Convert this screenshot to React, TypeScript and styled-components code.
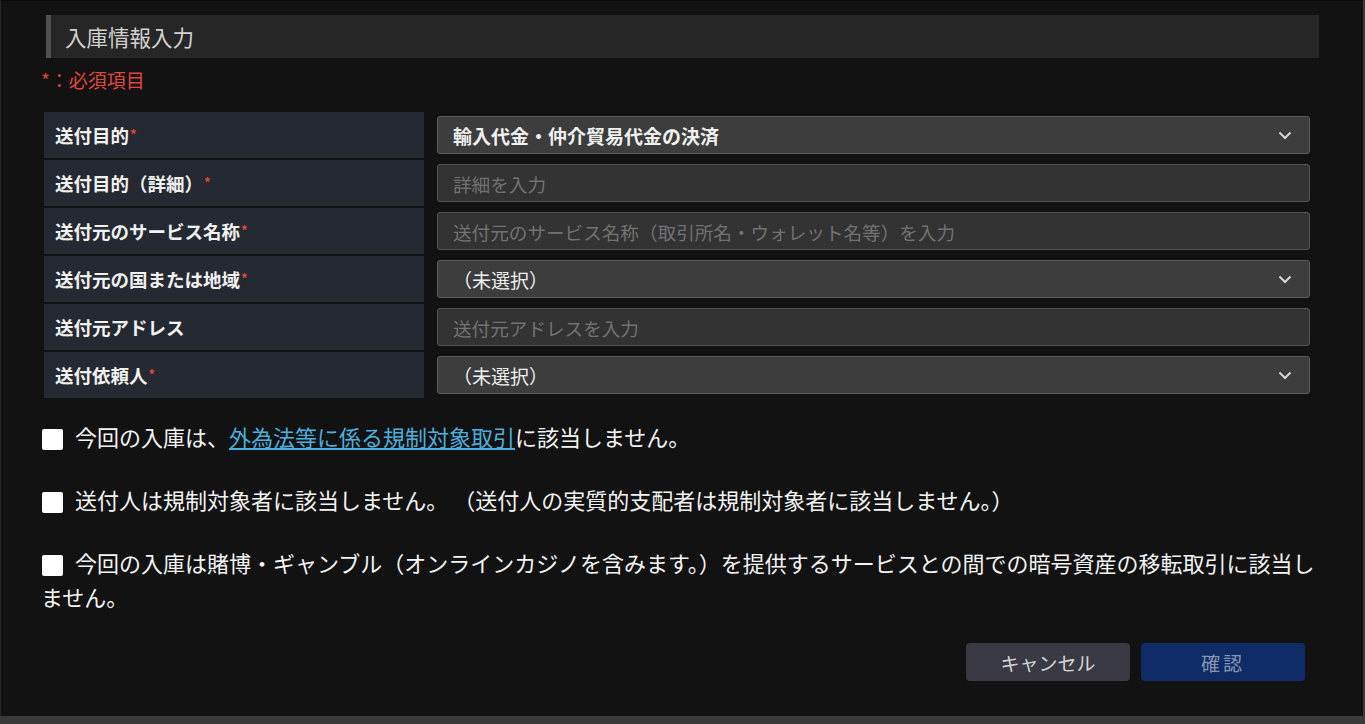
import React from 'react';
import styled, { createGlobalStyle } from 'styled-components';

const GlobalStyle = createGlobalStyle`
  body {
    margin: 0;
    background: #3a3a3a;
    font-family: "Noto Sans CJK JP", "Noto Sans", sans-serif;
  }
`;

type Field = {
  label: string;
  required?: boolean;
  kind: 'select' | 'input';
  value?: string;
  placeholder?: string;
};

const fields: Field[] = [
  { label: '送付目的', required: true, kind: 'select', value: '輸入代金・仲介貿易代金の決済' },
  { label: '送付目的（詳細）', required: true, kind: 'input', placeholder: '詳細を入力' },
  { label: '送付元のサービス名称', required: true, kind: 'input', placeholder: '送付元のサービス名称（取引所名・ウォレット名等）を入力' },
  { label: '送付元の国または地域', required: true, kind: 'select', value: '（未選択）' },
  { label: '送付元アドレス', kind: 'input', placeholder: '送付元アドレスを入力' },
  { label: '送付依頼人', required: true, kind: 'select', value: '（未選択）' },
];

const Chevron = () => (
  <svg width="14" height="9" viewBox="0 0 14 9">
    <polyline points="1.5,1.5 7,7 12.5,1.5" fill="none" stroke="#d8d8d8" strokeWidth="2" />
  </svg>
);

const App = () => {
  return (
    <>
      <GlobalStyle />
      <Card>
        <Heading>入庫情報入力</Heading>
        <Note>*：必須項目</Note>
        <Table>
          {fields.map((f) => (
            <Row key={f.label}>
              <Label>
                {f.label}
                {f.required && <Star>*</Star>}
              </Label>
              <Cell>
                {f.kind === 'select' ? (
                  <Select $bold={f.value !== '（未選択）'}>
                    <span>{f.value}</span>
                    <Chevron />
                  </Select>
                ) : (
                  <Input placeholder={f.placeholder} />
                )}
              </Cell>
            </Row>
          ))}
        </Table>
        <Checks>
          <Check>
            <Box type="checkbox" />
            今回の入庫は、<Link href="#">外為法等に係る規制対象取引</Link>に該当しません。
          </Check>
          <Check>
            <Box type="checkbox" />
            送付人は規制対象者に該当しません。 （送付人の実質的支配者は規制対象者に該当しません。）
          </Check>
          <Check>
            <Box type="checkbox" />
            今回の入庫は賭博・ギャンブル（オンラインカジノを含みます。）を提供するサービスとの間での暗号資産の移転取引に該当しません。
          </Check>
        </Checks>
        <Actions>
          <Button $variant="cancel">キャンセル</Button>
          <Button $variant="confirm">確認</Button>
        </Actions>
      </Card>
    </>
  );
};

export default App;

const Card = styled.div`
  width: 1363px;
  height: 716px;
  box-sizing: border-box;
  background: #121212;
  border-top: 1px solid #0a0a0a;
  border-left: 1px solid #262626;
  padding: 14px 44px 0 40px;
`;

const Heading = styled.div`
  margin-left: 5px;
  height: 43px;
  box-sizing: border-box;
  display: flex;
  align-items: center;
  background: #262626;
  border-left: 5px solid #505050;
  padding-left: 14px;
  font-size: 21.5px;
  color: #d2d2d2;
`;

const Note = styled.div`
  margin-top: 9px;
  height: 26px;
  line-height: 26px;
  font-size: 19px;
  color: #e0473a;
`;

const Table = styled.div`
  margin: 19px 9px 0 3px;
  display: flex;
  flex-direction: column;
  gap: 2px;
`;

const Row = styled.div`
  display: flex;
  align-items: center;
  gap: 13px;
  height: 46px;
`;

const Label = styled.div`
  width: 380px;
  height: 100%;
  box-sizing: border-box;
  display: flex;
  align-items: center;
  padding-left: 11px;
  background: #252932;
  color: #f2f2f2;
  font-size: 18.5px;
  font-weight: bold;
`;

const Star = styled.span`
  color: #e0473a;
  font-size: 13px;
  align-self: flex-start;
  margin-top: 12px;
  margin-left: 1px;
`;

const Cell = styled.div`
  flex: 1;
`;

const Select = styled.div<{ $bold: boolean }>`
  height: 38px;
  box-sizing: border-box;
  display: flex;
  align-items: center;
  justify-content: space-between;
  padding: 0 17px 0 15px;
  background: #3d3d3d;
  border: 1px solid #5e5e5e;
  border-radius: 3px;
  color: #f0f0f0;
  font-size: 19px;
  font-weight: ${(p) => (p.$bold ? 'bold' : 'normal')};
`;

const Input = styled.input`
  width: 100%;
  height: 38px;
  box-sizing: border-box;
  padding: 0 15px;
  background: #333333;
  border: 1px solid #555555;
  border-radius: 3px;
  color: #f0f0f0;
  font-family: inherit;
  font-size: 18.6px;
  outline: none;

  &::placeholder {
    color: #727272;
  }
`;

const Checks = styled.div`
  margin-top: 21px;
  display: flex;
  flex-direction: column;
  gap: 29px;
`;

const Check = styled.label`
  display: block;
  color: #f4f4f4;
  font-size: 22px;
  line-height: 34px;
`;

const Box = styled.input`
  appearance: none;
  width: 21px;
  height: 21px;
  margin: 0 12px 0 1px;
  vertical-align: -4px;
  background: #ffffff;
  border-radius: 2px;
`;

const Link = styled.a`
  color: #4ab0dd;
  text-decoration: underline;
`;

const Actions = styled.div`
  margin: 30px 14px 0 0;
  display: flex;
  justify-content: flex-end;
  gap: 11px;
`;

const Button = styled.button<{ $variant: 'cancel' | 'confirm' }>`
  width: 164px;
  height: 38px;
  border: none;
  border-radius: 4px;
  font-family: inherit;
  font-size: 19px;
  cursor: pointer;
  background: ${(p) => (p.$variant === 'cancel' ? '#393a44' : '#0f2b68')};
  color: ${(p) => (p.$variant === 'cancel' ? '#d6d6d6' : '#8796b0')};
  letter-spacing: ${(p) => (p.$variant === 'confirm' ? '3px' : '0')};
`;
